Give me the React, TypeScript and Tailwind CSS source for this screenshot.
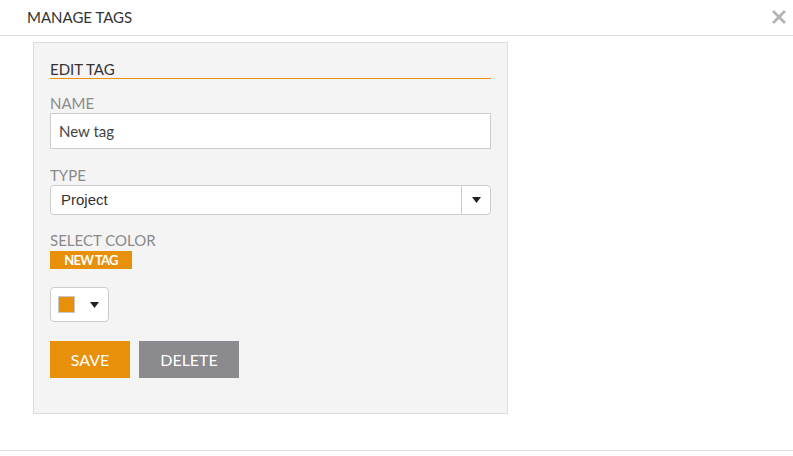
import { X } from 'lucide-react'

const lato = { fontFamily: 'Lato, "Liberation Sans", sans-serif' }

function Caret() {
  return (
    <svg width="9" height="6" viewBox="0 0 9 6" className="block">
      <path d="M0 0h9L4.5 6z" fill="#222" />
    </svg>
  )
}

export default function App() {
  return (
    <div className="w-[793px] h-[456px] bg-white relative" style={lato}>
      {/* Header */}
      <div className="h-9 border-b border-[#dcdde3] flex items-center px-[27px]">
        <span className="text-[15px] leading-[18px] text-[#333] -mt-[1px]">MANAGE TAGS</span>
      </div>
      <button className="absolute right-[4px] top-[7px] text-[#b3b3b3]">
        <X className="w-5 h-5" strokeWidth={3.2} strokeLinecap="square" />
      </button>

      {/* Body */}
      <div className="h-[415px] border-b border-[#dcdde3] pt-[6px] pl-[33px]">
        <div className="w-[475px] h-[372px] border border-[#dddddd] bg-[#f4f4f4] px-4 pt-[18px]">
          <div className="text-[15px] leading-[17px] text-[#333] border-b border-[#e8900a]">
            EDIT TAG
          </div>

          {/* Name */}
          <div className="mt-[15px] text-[15px] leading-[18px] text-[#8a8a8a]">NAME</div>
          <div className="mt-[1px] h-9 bg-white border border-[#cccccc] flex items-center pl-2 text-[15px] text-[#444]">
            New tag
          </div>

          {/* Type */}
          <div className="mt-[17px] text-[15px] leading-[18px] text-[#8a8a8a]">TYPE</div>
          <div className="mt-[1px] h-[30px] bg-white border border-[#cccccc] rounded flex items-center">
            <span
              className="flex-1 pl-[10px] text-[15px] text-[#333]"
              style={{ fontFamily: '"Liberation Sans", Arial, sans-serif' }}
            >
              Project
            </span>
            <span className="w-[29px] h-full border-l border-[#cccccc] flex items-center justify-center">
              <Caret />
            </span>
          </div>

          {/* Color */}
          <div className="mt-4 text-[15px] leading-[18px] text-[#8a8a8a]">SELECT COLOR</div>
          <div className="mt-[2px] w-[82px] h-[18px] bg-[#e8900a] flex items-center justify-center text-[13px] leading-none font-bold text-white tracking-[-0.8px]">
            NEW TAG
          </div>
          <div className="mt-[18px] w-[59px] h-[35px] bg-white border border-[#cccccc] rounded flex items-center pl-[7px] gap-[15px]">
            <span className="w-[17px] h-[17px] bg-[#e8900a] border border-[#c8c8c8]" />
            <Caret />
          </div>

          {/* Actions */}
          <div className="mt-[19px] flex gap-[9px]">
            <button className="w-20 h-[37px] bg-[#e8900a] text-white text-[16px]">SAVE</button>
            <button className="w-[100px] h-[37px] bg-[#8b8a8f] text-white text-[16px]">DELETE</button>
          </div>
        </div>
      </div>
    </div>
  )
}
